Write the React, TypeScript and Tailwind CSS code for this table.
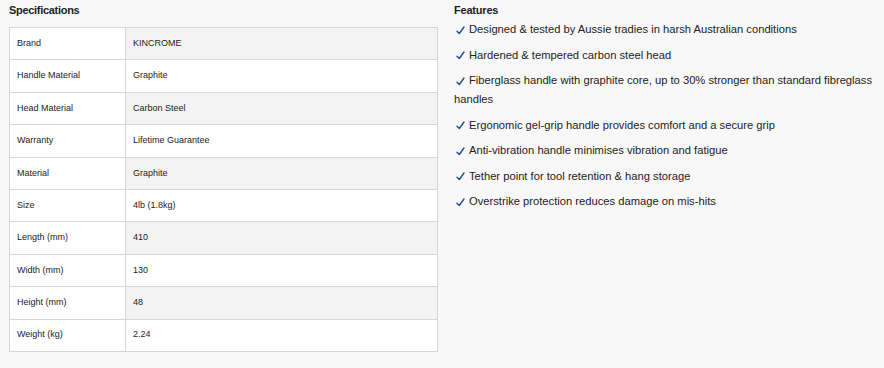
const SPECS: [string, string][] = [
  ['Brand', 'KINCROME'],
  ['Handle Material', 'Graphite'],
  ['Head Material', 'Carbon Steel'],
  ['Warranty', 'Lifetime Guarantee'],
  ['Material', 'Graphite'],
  ['Size', '4lb (1.8kg)'],
  ['Length (mm)', '410'],
  ['Width (mm)', '130'],
  ['Height (mm)', '48'],
  ['Weight (kg)', '2.24'],
]

const FEATURES = [
  'Designed & tested by Aussie tradies in harsh Australian conditions',
  'Hardened & tempered carbon steel head',
  'Fiberglass handle with graphite core, up to 30% stronger than standard fibreglass handles',
  'Ergonomic gel-grip handle provides comfort and a secure grip',
  'Anti-vibration handle minimises vibration and fatigue',
  'Tether point for tool retention & hang storage',
  'Overstrike protection reduces damage on mis-hits',
]

function Check() {
  return (
    <svg
      width="9"
      height="9"
      viewBox="0 0 9 9"
      fill="none"
      stroke="#1f4e96"
      strokeWidth="1.4"
      strokeLinecap="round"
      strokeLinejoin="round"
      className="inline-block ml-[2px] mr-[4px]"
      aria-hidden="true"
    >
      <path d="M1 5.2l2.3 2.3L8 1" />
    </svg>
  )
}

export default function App() {
  return (
    <div className="w-[884px] h-[368px] bg-[#f8f8f8] text-[#222] flex font-['Liberation_Sans',Arial,sans-serif]">
      {/* Specifications */}
      <div className="w-[454px] pl-[9px] pt-[3px]">
        <h3 className="text-[11px] font-bold leading-[14px] mb-[10px] tracking-[-0.3px]">Specifications</h3>
        <table className="w-[429px] border-collapse text-[9px]">
          <tbody>
            {SPECS.map(([label, value], i) => (
              <tr key={label} className="h-[32.4px]">
                <td className="w-[116px] border border-[#d6d6d6] bg-white pl-[7px] align-middle">{label}</td>
                <td className={`border border-[#d6d6d6] pl-[7px] align-middle ${i % 2 === 0 ? 'bg-[#f3f3f3]' : 'bg-white'}`}>
                  {value}
                </td>
              </tr>
            ))}
          </tbody>
        </table>
      </div>

      {/* Features */}
      <div className="flex-1 pt-[3px] pr-[3px]">
        <h3 className="text-[11px] font-bold leading-[14px] tracking-[-0.2px]">Features</h3>
        <ul className="text-[11.2px] leading-[19px] mt-[3px] flex flex-col gap-[6.5px]">
          {FEATURES.map((f) => (
            <li key={f}>
              <Check />
              {f}
            </li>
          ))}
        </ul>
      </div>
    </div>
  )
}
